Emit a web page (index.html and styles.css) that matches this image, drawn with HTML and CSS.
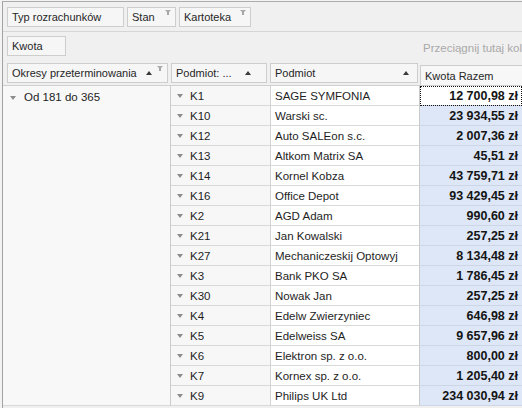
FILE: index.html
```html
<!DOCTYPE html>
<html>
	<head>
		<meta charset="utf-8" />
		<title>Rozrachunki - tabela przestawna</title>
		<link rel="stylesheet" href="styles.css">
	</head>
	<body>
		<div class="pivot">
			<div class="filterArea">
				<span class="field wTyp">Typ rozrachunków</span>
				<span class="field wStan">Stan<i class="funnel"></i></span>
				<span class="field wKart">Kartoteka<i class="funnel"></i></span>
			</div>
			<div class="dataArea">
				<span class="field wKwota">Kwota</span>
				<span class="hint">Przeciągnij tutaj kolumny</span>
			</div>
			<div class="headArea">
				<span class="field wOkres">Okresy przeterminowania<i class="sort"></i><i class="funnel"></i></span>
				<span class="field wKod">Podmiot: ...<i class="sort"></i></span>
				<span class="field wNazwa">Podmiot<i class="sort"></i></span>
				<span class="field wRazem">Kwota Razem</span>
			</div>
			<div class="rows">
				<div class="groupCell"><i class="expand"></i>Od 181 do 365</div>

				<div class="kod"><i class="expand"></i>K1</div><div class="nazwa">SAGE SYMFONIA</div><div class="kwota focus">12 700,98 zł</div>
				<div class="kod"><i class="expand"></i>K10</div><div class="nazwa">Warski sc.</div><div class="kwota">23 934,55 zł</div>
				<div class="kod"><i class="expand"></i>K12</div><div class="nazwa">Auto SALEon s.c.</div><div class="kwota">2 007,36 zł</div>
				<div class="kod"><i class="expand"></i>K13</div><div class="nazwa">Altkom Matrix SA</div><div class="kwota">45,51 zł</div>
				<div class="kod"><i class="expand"></i>K14</div><div class="nazwa">Kornel Kobza</div><div class="kwota">43 759,71 zł</div>
				<div class="kod"><i class="expand"></i>K16</div><div class="nazwa">Office Depot</div><div class="kwota">93 429,45 zł</div>
				<div class="kod"><i class="expand"></i>K2</div><div class="nazwa">AGD Adam</div><div class="kwota">990,60 zł</div>
				<div class="kod"><i class="expand"></i>K21</div><div class="nazwa">Jan Kowalski</div><div class="kwota">257,25 zł</div>
				<div class="kod"><i class="expand"></i>K27</div><div class="nazwa">Mechaniczeskij Optowyj</div><div class="kwota">8 134,48 zł</div>
				<div class="kod"><i class="expand"></i>K3</div><div class="nazwa">Bank PKO SA</div><div class="kwota">1 786,45 zł</div>
				<div class="kod"><i class="expand"></i>K30</div><div class="nazwa">Nowak Jan</div><div class="kwota">257,25 zł</div>
				<div class="kod"><i class="expand"></i>K4</div><div class="nazwa">Edelw Zwierzyniec</div><div class="kwota">646,98 zł</div>
				<div class="kod"><i class="expand"></i>K5</div><div class="nazwa">Edelweiss SA</div><div class="kwota">9 657,96 zł</div>
				<div class="kod"><i class="expand"></i>K6</div><div class="nazwa">Elektron sp. z o.o.</div><div class="kwota">800,00 zł</div>
				<div class="kod"><i class="expand"></i>K7</div><div class="nazwa">Kornex sp. z o.o.</div><div class="kwota">1 205,40 zł</div>
				<div class="kod"><i class="expand"></i>K9</div><div class="nazwa">Philips UK Ltd</div><div class="kwota">234 030,94 zł</div>
			</div>
		</div>
	</body>
</html>
```

FILE: styles.css
```css
html,body{margin:0;padding:0;}
body{
	background:#f3f3f3;
	font-family:"Liberation Sans",Arial,sans-serif;
	font-size:11px;
	color:#1e1e1e;
	overflow:hidden;
}
i{display:inline-block;font-style:normal;}

.pivot{
	margin:1px 0 0 2px;
	height:407px;
	border-left:1px solid #a3a3a3;
	border-top:1px solid #acacac;
	overflow:hidden;
	background:#f0f0f0;
}

/* pola w obszarach */
.field{
	position:relative;
	display:flex;
	align-items:center;
	flex-shrink:0;
	box-sizing:border-box;
	height:20px;
	padding:0 0 0 4px;
	border:1px solid #cdcdcd;
	background:#f6f6f6;
	color:#262626;
	white-space:nowrap;
}
.funnel{
	position:absolute;
	top:2px;
	right:4px;
	width:0;
	height:0;
	border-left:3px solid transparent;
	border-right:3px solid transparent;
	border-top:3px solid #a8a8a8;
}
.funnel:after{
	content:'';
	position:absolute;
	left:-1px;
	top:-1px;
	width:2px;
	height:3px;
	background:#a8a8a8;
}
.sort{
	position:absolute;
	top:7px;
	width:0;
	height:0;
	border-left:3px solid transparent;
	border-right:3px solid transparent;
	border-bottom:4px solid #3a3a3a;
}
.expand{
	width:0;
	height:0;
	margin-right:7px;
	border-left:3px solid transparent;
	border-right:3px solid transparent;
	border-top:4px solid #8c8c8c;
}

.filterArea{
	display:flex;
	gap:3px;
	height:30px;
	padding:5px 0 0 4px;
	box-sizing:border-box;
	border-bottom:1px solid #d6d6d6;
}
.wTyp{width:117px;}
.wStan{width:49px;}
.wKart{width:72px;}

.dataArea{
	display:flex;
	height:29px;
	padding:4px 0 0 4px;
	box-sizing:border-box;
	overflow:hidden;
}
.wKwota{width:59px;}
.hint{
	flex-shrink:0;
	margin:6px 0 0 357px;
	color:#a9a9a9;
	font-size:11.5px;
	white-space:nowrap;
}

.headArea{
	display:flex;
	gap:3px;
	height:25px;
	padding:2px 0 0 4px;
	box-sizing:border-box;
	border-bottom:1px solid #d0d0d0;
	overflow:hidden;
}
.wOkres{width:161px;}
.wOkres .sort{left:138px;}
.wOkres .funnel{right:4px;}
.wKod{width:96px;}
.wKod .sort{left:73px;}
.wNazwa{width:148px;}
.wNazwa .sort{left:132px;}
.wRazem{
	width:104px;
	margin:2px 0 0 -1px;
	height:21px;
	border-bottom:0;
	background:#f7f7f7;
}

/* wiersze */
.rows{
	display:grid;
	grid-template-columns:168px 100px 149px 102px;
	grid-auto-rows:20px;
	background:#fff;
}
.rows > div{
	box-sizing:border-box;
	display:flex;
	align-items:center;
	border-bottom:1px solid #d9d9d9;
	white-space:nowrap;
	overflow:hidden;
}
.groupCell{
	grid-row:1 / span 16;
	align-items:flex-start !important;
	padding:5px 0 0 7px;
	background:#f8f8f8;
	border-right:1px solid #cccccc;
	font-size:11.5px;
}
.groupCell .expand{margin:5px 8px 0 0;}
.kod{
	padding-left:6px;
	background:#f7f7f7;
	border-right:1px solid #d3d3d3;
	font-size:11.5px;
}
.nazwa{
	padding-left:4px;
	border-right:1px solid #c9c9c9;
	font-size:11.5px;
}
.kwota{
	justify-content:flex-end;
	padding-right:4px;
	background:#dde7f7;
	border-bottom-color:#cdd6e5 !important;
	font-weight:bold;
	font-size:12.5px;
	color:#141414;
}
.kwota.focus{
	background:#fff;
	outline:1px dotted #111;
	outline-offset:-1px;
}
```
